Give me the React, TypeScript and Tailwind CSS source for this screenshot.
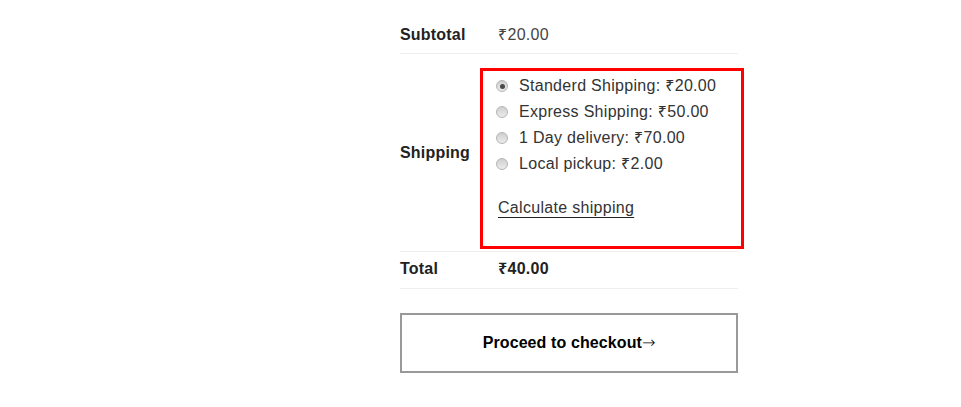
import React from "react";

const options = [
  { label: "Standerd Shipping: ₹20.00", checked: true },
  { label: "Express Shipping: ₹50.00", checked: false },
  { label: "1 Day delivery: ₹70.00", checked: false },
  { label: "Local pickup: ₹2.00", checked: false },
];

function Radio({ checked }: { checked: boolean }) {
  return (
    <span className="relative ml-[-2px] mr-[11px] inline-flex h-[12px] w-[12px] shrink-0 items-center justify-center rounded-full border border-[#b4b4b4] bg-gradient-to-b from-[#cfcfcf] to-[#ececec]">
      {checked && <span className="h-[5px] w-[5px] rounded-full bg-[#4a4a4a]" />}
    </span>
  );
}

export default function App() {
  return (
    <div className="h-[407px] w-[961px] bg-white text-[16px] font-['Liberation_Sans','Noto_Sans',sans-serif] text-[#333]">
      <div className="ml-[400px] w-[338px] pt-[23px]">
        {/* Subtotal */}
        <div className="flex border-b border-[#eeeeee] pb-[6px] leading-6">
          <div className="w-[98px] font-bold tracking-[0.2px] text-[#222]">Subtotal</div>
          <div className="tracking-[0.3px] text-[#444]">₹20.00</div>
        </div>
        {/* Shipping */}
        <div className="flex border-b border-[#eeeeee]">
          <div className="w-[98px] self-center font-bold leading-6 tracking-[0.2px] text-[#222]">Shipping</div>
          <div className="flex-1 pb-[2px] pt-[14px]">
            <div className="ml-[-18px] mr-[-6px] border-[3px] border-[#ff0000] pb-[26px] pl-[15px] pt-[2px]">
              <ul>
                {options.map((o) => (
                  <li key={o.label} className="flex h-[26px] items-center">
                    <Radio checked={o.checked} />
                    <span className="tracking-[0.3px] text-[#333]">{o.label}</span>
                  </li>
                ))}
              </ul>
              <div className="mt-[19px] leading-6">
                <span className="tracking-[0.3px] text-[#333] underline decoration-[#222] decoration-1 underline-offset-[4px]">
                  Calculate shipping
                </span>
              </div>
            </div>
          </div>
        </div>
        {/* Total */}
        <div className="flex border-b border-[#eeeeee] pb-[7px] pt-[5px] leading-6">
          <div className="w-[98px] font-bold tracking-[0.2px] text-[#222]">Total</div>
          <div className="font-bold tracking-[0.3px] text-[#222]">₹40.00</div>
        </div>
        {/* Button */}
        <div className="mt-[24px] flex h-[60px] items-center justify-center border-2 border-[#999999] font-bold leading-6 text-black">
          <span className="tracking-[0.1px]">Proceed to checkout</span>
          <span className="font-['DejaVu_Sans',sans-serif] text-[16px] font-extralight">→</span>
        </div>
      </div>
    </div>
  );
}
